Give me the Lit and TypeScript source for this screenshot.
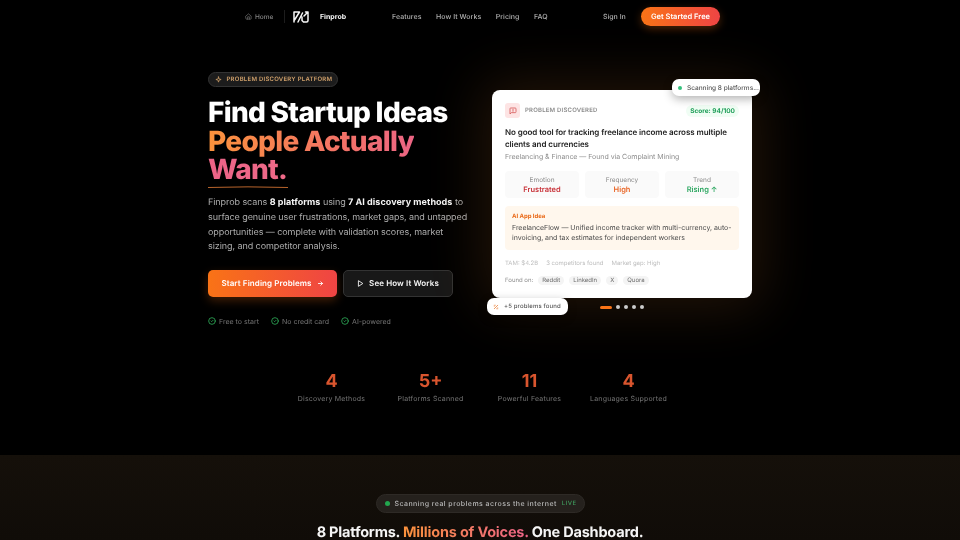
import { css, html, LitElement, svg } from 'lit'
import { customElement } from 'lit/decorators.js'

const check = svg`<circle cx="12" cy="12" r="10"/><path d="m9 12 2 2 4-4"/>`

@customElement('app-root')
export class AppRoot extends LitElement {
  static override styles = css`
    :host {
      display: block;
      width: 960px;
      height: 540px;
      overflow: hidden;
      background: #000;
      color: #fff;
      font-family: Inter, 'Liberation Sans', sans-serif;
      text-rendering: geometricPrecision;
      filter: blur(.3px);
    }
    * { box-sizing: border-box; }
    svg { display: block; flex: none; fill: none; stroke: currentColor; stroke-linecap: round; stroke-linejoin: round; }

    .nav { height: 32px; padding: 7px 0 0 245px; display: flex; align-items: flex-start; }
    .home { display: flex; align-items: center; gap: 3px; height: 19px; font-size: 6.5px; font-weight: 500; color: #858585; width: 39px; }
    .divider { width: 1px; height: 13px; margin-top: 3px; background: #1d1d1d; }
    .brand { display: flex; align-items: center; height: 19px; margin-left: 8px; gap: 11px; font-size: 7px; font-weight: 700; color: #f7f7f7; width: 99px; }
    .links { display: flex; gap: 14.5px; height: 19px; align-items: center; font-size: 7px; letter-spacing: .05px; font-weight: 500; color: #b0b0b0; width: 211px; }
    .signin { height: 19px; display: flex; align-items: center; font-size: 7px; font-weight: 500; color: #b0b0b0; width: 38px; }
    .cta { width: 79px; height: 19px; border-radius: 9.5px; background: linear-gradient(90deg, #f97316, #ef4444); box-shadow: 0 3px 8px rgba(249, 115, 22, .3); display: flex; align-items: center; justify-content: center; font-size: 7.5px; font-weight: 600; }

    .hero { display: flex; height: 338px; padding: 40px 0 0 208px; position: relative; }
    .left { width: 284px; }
    .pill { width: 130px; height: 15px; border-radius: 8px; background: #1c1c1c; border: 1px solid #333; display: flex; align-items: center; gap: 4.5px; padding-left: 6px; font-size: 6px; font-weight: 600; letter-spacing: .25px; color: #d2a26c; white-space: nowrap; }
    h1 { margin: 11px 0 0; font-size: 28px; line-height: 28.7px; font-weight: 800; letter-spacing: -.7px; color: #fff; }
    .grad { background: linear-gradient(90deg, #fb923c 0%, #f2706a 50%, #ec6488 75%, #ef6a88 100%); -webkit-background-clip: text; background-clip: text; color: transparent; }
    .underline { width: 80px; height: 2px; margin-top: 2px; }
    .desc { margin: 8px 0 0; width: 262px; font-size: 9px; letter-spacing: -.07px; line-height: 14.7px; color: #adadad; }
    .desc b { color: #f5f5f5; font-weight: 700; letter-spacing: .05px; }
    .btns { display: flex; gap: 6px; margin-top: 15px; }
    .btn { height: 27px; border-radius: 5px; display: flex; align-items: center; justify-content: center; gap: 5px; font-size: 8px; letter-spacing: .1px; font-weight: 600; }
    .primary { width: 129px; background: linear-gradient(90deg, #f97316, #ef4444); box-shadow: 0 4px 10px rgba(249, 115, 22, .25); }
    .secondary { width: 110px; background: #181818; border: 1px solid #333; color: #f7f7f7; }
    .checks { display: flex; gap: 12px; margin-top: 20px; font-size: 7px; color: #757575; }
    .checks span { display: flex; align-items: center; gap: 3px; }
    .checks svg { color: #2eaa58; }

    .right { position: relative; width: 260px; height: 208px; margin-top: 18px; }
    .card { position: relative; height: 208px; border-radius: 8px; background: #fff; padding: 13px 13px 0; color: #1a1a1a; box-shadow: 0 0 55px 10px rgba(240, 140, 60, .14); }
    .card-head { display: flex; align-items: center; height: 15px; }
    .card-icon { width: 15px; height: 15px; border-radius: 3px; background: #fde4e4; color: #d65a5a; display: flex; align-items: center; justify-content: center; margin-right: 5px; }
    .card-label { font-size: 6px; font-weight: 600; letter-spacing: .2px; color: #8a8a8a; flex: 1; }
    .score { height: 12px; padding: 0 4px; border-radius: 6px; background: #f0fdf4; color: #1e9e58; font-size: 6.5px; font-weight: 700; display: flex; align-items: center; }
    .card-title { margin: 8px 0 0; font-size: 8px; letter-spacing: -.07px; line-height: 12px; font-weight: 600; color: #1f1f1f; }
    .card-sub { margin-top: 1px; font-size: 7px; letter-spacing: -.03px; line-height: 11px; color: #8c8c8c; }
    .metrics { display: grid; grid-template-columns: repeat(3, 1fr); gap: 6px; margin-top: 9px; }
    .metric { height: 27px; border-radius: 4px; background: #fafafa; text-align: center; padding-top: 5px; font-size: 6.5px; line-height: 9px; color: #8c8c8c; }
    .metric strong { display: block; font-size: 7.5px; line-height: 10px; font-weight: 600; }
    .idea { margin-top: 8px; height: 44px; border-radius: 4px; background: #fff7ed; padding: 7px 5px 0 7px; font-size: 7px; letter-spacing: -.04px; line-height: 10px; color: #4a4a4a; }
    .idea-title { font-size: 6px; line-height: 8px; font-weight: 700; color: #ea6c1c; margin-bottom: 2px; }
    .meta { display: flex; gap: 8px; margin-top: 9px; font-size: 6px; line-height: 9px; color: #bdbdbd; }
    .found { display: flex; align-items: center; gap: 5px; margin-top: 8px; font-size: 6px; color: #8c8c8c; }
    .tag { height: 9px; padding: 0 4px; border-radius: 5px; background: #f4f4f4; color: #6b6b6b; display: flex; align-items: center; }
    .float { position: absolute; background: #fff; border-radius: 7px; box-shadow: 0 3px 10px rgba(0, 0, 0, .3); display: flex; align-items: center; font-weight: 500; color: #555; white-space: nowrap; }
    .scan { top: -11px; left: 180px; width: 88px; height: 17px; padding-left: 6px; gap: 5px; font-size: 6.5px; }
    .scan i { width: 4px; height: 4px; border-radius: 50%; background: #34c07c; }
    .found-float { top: 208px; left: -5px; width: 81px; height: 17px; padding-left: 6px; gap: 5px; font-size: 6px; letter-spacing: .15px; }
    .dots { position: absolute; top: 215px; left: 108px; height: 4px; display: flex; gap: 4px; align-items: center; }
    .dots i { width: 4px; height: 4px; border-radius: 2px; background: #ccc; }
    .dots i:first-child { width: 12px; height: 3px; background: #f97316; }

    .stats { display: flex; justify-content: center; height: 85px; }
    .stat { width: 99px; text-align: center; font-size: 7px; letter-spacing: .2px; color: #757575; line-height: 10px; }
    .stat strong { display: block; font-size: 18px; line-height: 24px; font-weight: 700; color: #d9552e; letter-spacing: 0; }

    .band { height: 85px; overflow: hidden; background: linear-gradient(180deg, #15100a, #100c08); display: flex; flex-direction: column; align-items: center; padding-top: 39px; }
    .live { flex: none; height: 19px; width: 209px; padding-left: 8px; border-radius: 10px; background: #25211d; border: 1px solid #2e2a26; display: flex; align-items: center; gap: 5px; font-size: 7px; font-weight: 500; letter-spacing: .45px; color: #b8b8b8; white-space: nowrap; }
    .live i { width: 5px; height: 5px; border-radius: 50%; background: #22a74f; }
    .live em { font-style: normal; font-size: 6px; color: #3f9a5c; }
    h2 { flex: none; margin: 10px 0 0; font-size: 14.5px; line-height: 20px; font-weight: 700; color: #f5f5f5; white-space: nowrap; letter-spacing: -.2px; }
    h2 span { background: linear-gradient(90deg, #fb923c, #ec6488); -webkit-background-clip: text; background-clip: text; color: transparent; }
  `

  override render() {
    return html`
      <div class="nav">
        <div class="home">
          <svg width="7" height="7" viewBox="0 0 24 24" stroke-width="2"><path d="M3 10.5 12 3l9 7.5V20a1 1 0 0 1-1 1H4a1 1 0 0 1-1-1z"/><path d="M9 21v-8h6v8"/></svg>
          Home
        </div>
        <div class="divider"></div>
        <div class="brand">
          <svg width="16" height="12" viewBox="0 0 16 12" stroke-width="1.5"><path d="M1 11V1h5.5L1.5 9M5 11l4.5-9M9 6v3.5L10.5 11h3A1.5 1.5 0 0 0 15 9.500V4M11 5l4-4M12.500 1H15v2.500"/></svg>
          Finprob
        </div>
        <div class="links"><span>Features</span><span>How It Works</span><span>Pricing</span><span>FAQ</span></div>
        <div class="signin">Sign In</div>
        <div class="cta">Get Started Free</div>
      </div>
      <div class="hero">
        <div class="left">
          <div class="pill">
            <svg width="7" height="7" viewBox="0 0 24 24" stroke-width="2.5"><path d="M12 3l2 7 7 2-7 2-2 7-2-7-7-2 7-2z"/></svg>
            PROBLEM DISCOVERY PLATFORM
          </div>
          <h1>Find Startup Ideas<br /><span class="grad">People Actually<br />Want.</span></h1>
          <svg class="underline" viewBox="0 0 80 2" preserveAspectRatio="none"><path d="M0 1.5Q40 .2 80 1.5" stroke="#b8642c" stroke-width="1"/></svg>
          <p class="desc">Finprob scans <b>8 platforms</b> using <b>7 AI discovery methods</b> to surface genuine user frustrations, market gaps, and untapped opportunities — complete with validation scores, market sizing, and competitor analysis.</p>
          <div class="btns">
            <div class="btn primary">Start Finding Problems
              <svg width="7" height="7" viewBox="0 0 24 24" stroke-width="3"><path d="M5 12h14M13 6l6 6-6 6"/></svg>
            </div>
            <div class="btn secondary">
              <svg width="7" height="7" viewBox="0 0 24 24" stroke-width="3"><path d="M6 3l14 9-14 9z"/></svg>
              See How It Works
            </div>
          </div>
          <div class="checks">
            <span><svg width="8" height="8" viewBox="0 0 24 24" stroke-width="2.5">${check}</svg>Free to start</span>
            <span><svg width="8" height="8" viewBox="0 0 24 24" stroke-width="2.5">${check}</svg>No credit card</span>
            <span><svg width="8" height="8" viewBox="0 0 24 24" stroke-width="2.5">${check}</svg>AI-powered</span>
          </div>
        </div>
        <div class="right">
          <div class="card">
            <div class="card-head">
              <div class="card-icon"><svg width="8" height="8" viewBox="0 0 24 24" stroke-width="2.5"><path d="M21 15a2 2 0 0 1-2 2H7l-4 4V5a2 2 0 0 1 2-2h14a2 2 0 0 1 2 2z"/><path d="M12 7v4M12 14h0"/></svg></div>
              <div class="card-label">PROBLEM DISCOVERED</div>
              <div class="score">Score: 94/100</div>
            </div>
            <div class="card-title">No good tool for tracking freelance income across multiple clients and currencies</div>
            <div class="card-sub">Freelancing &amp; Finance — Found via Complaint Mining</div>
            <div class="metrics">
              <div class="metric">Emotion<strong style="color:#c9353c">Frustrated</strong></div>
              <div class="metric">Frequency<strong style="color:#ea6a2c">High</strong></div>
              <div class="metric">Trend<strong style="color:#2fa863">Rising ↑</strong></div>
            </div>
            <div class="idea">
              <div class="idea-title">AI App Idea</div>
              FreelanceFlow — Unified income tracker with multi-currency, auto-invoicing, and tax estimates for independent workers
            </div>
            <div class="meta"><span>TAM: $4.2B</span><span>3 competitors found</span><span>Market gap: High</span></div>
            <div class="found">Found on: <span class="tag">Reddit</span><span class="tag">LinkedIn</span><span class="tag">X</span><span class="tag">Quora</span></div>
          </div>
          <div class="float scan"><i></i>Scanning 8 platforms...</div>
          <div class="float found-float">
            <svg width="6" height="6" viewBox="0 0 24 24" stroke-width="3" style="color:#ea7a2c"><path d="M5 5h.01M19 19h.01M9 5h.01M5 9h.01M15 19h.01M19 15h.01M5 19 19 5"/></svg>
            +5 problems found
          </div>
          <div class="dots"><i></i><i></i><i></i><i></i><i></i></div>
        </div>
      </div>
      <div class="stats">
        <div class="stat"><strong>4</strong>Discovery Methods</div>
        <div class="stat"><strong>5+</strong>Platforms Scanned</div>
        <div class="stat"><strong>11</strong>Powerful Features</div>
        <div class="stat"><strong>4</strong>Languages Supported</div>
      </div>
      <div class="band">
        <div class="live"><i></i>Scanning real problems across the internet <em>LIVE</em></div>
        <h2>8 Platforms. <span>Millions of Voices.</span> One Dashboard.</h2>
      </div>
    `
  }
}

declare global {
  interface HTMLElementTagNameMap {
    'app-root': AppRoot
  }
}
